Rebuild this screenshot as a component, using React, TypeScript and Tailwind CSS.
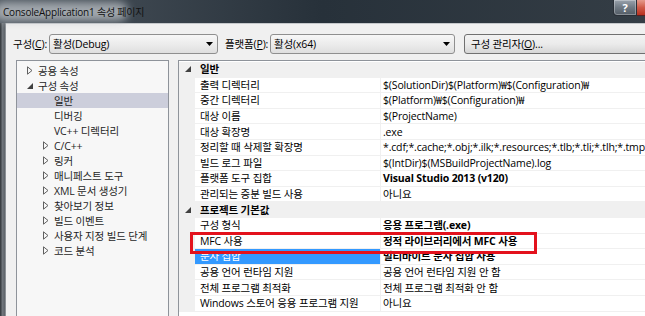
import React from "react";

type TreeItem = { label: string; level: 0 | 1; kind: "closed" | "open" | "none"; selected?: boolean };

const treeItems: TreeItem[] = [
  { label: "공용 속성", level: 0, kind: "closed" },
  { label: "구성 속성", level: 0, kind: "open" },
  { label: "일반", level: 1, kind: "none", selected: true },
  { label: "디버깅", level: 1, kind: "none" },
  { label: "VC++ 디렉터리", level: 1, kind: "none" },
  { label: "C/C++", level: 1, kind: "closed" },
  { label: "링커", level: 1, kind: "closed" },
  { label: "매니페스트 도구", level: 1, kind: "closed" },
  { label: "XML 문서 생성기", level: 1, kind: "closed" },
  { label: "찾아보기 정보", level: 1, kind: "closed" },
  { label: "빌드 이벤트", level: 1, kind: "closed" },
  { label: "사용자 지정 빌드 단계", level: 1, kind: "closed" },
  { label: "코드 분석", level: 1, kind: "closed" },
];

type GridRow =
  | { type: "cat"; label: string }
  | { type: "prop"; name: string; value: string; bold?: boolean; selected?: boolean };

const gridRows: GridRow[] = [
  { type: "cat", label: "일반" },
  { type: "prop", name: "출력 디렉터리", value: "$(SolutionDir)$(Platform)₩$(Configuration)₩" },
  { type: "prop", name: "중간 디렉터리", value: "$(Platform)₩$(Configuration)₩" },
  { type: "prop", name: "대상 이름", value: "$(ProjectName)" },
  { type: "prop", name: "대상 확장명", value: ".exe" },
  {
    type: "prop",
    name: "정리할 때 삭제할 확장명",
    value: "*.cdf;*.cache;*.obj;*.ilk;*.resources;*.tlb;*.tli;*.tlh;*.tmp;*.rsp;*.pgc;*.pgd;*.meta",
  },
  { type: "prop", name: "빌드 로그 파일", value: "$(IntDir)$(MSBuildProjectName).log" },
  { type: "prop", name: "플랫폼 도구 집합", value: "Visual Studio 2013 (v120)", bold: true },
  { type: "prop", name: "관리되는 증분 빌드 사용", value: "아니요" },
  { type: "cat", label: "프로젝트 기본값" },
  { type: "prop", name: "구성 형식", value: "응용 프로그램(.exe)", bold: true },
  { type: "prop", name: "MFC 사용", value: "정적 라이브러리에서 MFC 사용", bold: true },
  { type: "prop", name: "문자 집합", value: "멀티바이트 문자 집합 사용", bold: true, selected: true },
  { type: "prop", name: "공용 언어 런타임 지원", value: "공용 언어 런타임 지원 안 함" },
  { type: "prop", name: "전체 프로그램 최적화", value: "전체 프로그램 최적화 안 함" },
  { type: "prop", name: "Windows 스토어 응용 프로그램 지원", value: "아니요" },
];

const ClosedArrow = () => (
  <svg width="6" height="9" viewBox="0 0 6 9" className="shrink-0">
    <path d="M0.5 0.8 L5 4.5 L0.5 8.2 Z" fill="none" stroke="#606060" strokeWidth="1" />
  </svg>
);

const OpenArrow = () => (
  <svg width="6" height="6" viewBox="0 0 6 6" className="shrink-0">
    <path d="M6 0 L6 6 L0 6 Z" fill="#404040" />
  </svg>
);

const DropArrow = () => (
  <svg width="7" height="4" viewBox="0 0 7 4">
    <path d="M0 0 L7 0 L3.5 4 Z" fill="#000" />
  </svg>
);

const Combo = ({ text, width }: { text: string; width: string }) => (
  <div
    className={`${width} h-[20px] flex items-center justify-between pl-[3px] pr-[4px] rounded-[3px] border border-[#8f8f8f] bg-gradient-to-b from-[#f7f7f7] via-[#ececec] to-[#dfdfdf]`}
  >
    <span>{text}</span>
    <DropArrow />
  </div>
);

const Tree = () => (
  <div className="w-[153px] h-[270px] shrink-0 border border-[#8e939a] bg-[#f7f7f7] pt-[2px] text-[#1e1e1e]">
    {treeItems.map((item) => (
      <div
        key={item.label}
        className={`h-[15px] flex items-center ${item.selected ? "bg-[#cccedb]" : ""} ${
          item.level === 0 ? "pl-[10px]" : "pl-[26px]"
        }`}
      >
        <div className="w-[11px] flex items-center">
          {item.kind === "closed" && <ClosedArrow />}
          {item.kind === "open" && <OpenArrow />}
        </div>
        <span className="whitespace-nowrap">{item.label}</span>
      </div>
    ))}
  </div>
);

const Grid = () => (
  <div className="flex-1 h-[270px] border-l border-t border-[#8e939a] bg-white pt-[1px] overflow-hidden">
    {gridRows.map((row, i) =>
      row.type === "cat" ? (
        <div key={i} className="h-[15.6px] flex items-center bg-[#f0f0f0] border-b border-[#f0f0f0]">
          <div className="w-[16px] flex items-center justify-end pr-[4px]">
            <OpenArrow />
          </div>
          <span className="pl-[5px] font-bold whitespace-nowrap">{row.label}</span>
        </div>
      ) : (
        <div key={i} className="h-[15.6px] flex border-b border-[#f0f0f0]">
          <div className="w-[16px] shrink-0 bg-[#f0f0f0]" />
          <div
            className={`w-[185px] shrink-0 flex items-center pl-[5px] whitespace-nowrap ${
              row.selected ? "bg-[#3399ff] text-white" : ""
            }`}
          >
            {row.name}
          </div>
          <div className="w-px shrink-0 bg-[#f0f0f0]" />
          <div className={`flex-1 flex items-center pl-[2px] whitespace-nowrap ${row.bold ? "font-bold" : ""}`}>
            {row.value}
          </div>
        </div>
      )
    )}
  </div>
);

export default function App() {
  return (
    <div className="relative w-[645px] h-[316px] overflow-hidden bg-[#222b33] font-['Open_Sans','Noto_Sans_CJK_KR',sans-serif] text-[10.5px] leading-[14px] tracking-[-0.15px] text-black">
      {/* title bar */}
      <div className="relative h-[23px] flex items-start bg-gradient-to-r from-[#4c555e] via-[#27313a] to-[#343d45]">
        <div className="absolute left-[-6px] top-[2px] w-[134px] h-[19px] rounded-full bg-[#b9bec3]/80 blur-[4px]" />
        <span className="relative mt-[5px] ml-[3px] text-[10px] tracking-[-0.2px] text-[#111]">
          ConsoleApplication1 속성 페이지
        </span>
        <div className="ml-auto mr-[-35px] flex">
          <div className="w-[24px] h-[16px] flex items-center justify-center rounded-bl-[4px] border border-t-0 border-[#2a3038] bg-gradient-to-b from-[#9aa3ad] via-[#6f7983] to-[#535c66] text-white font-bold text-[11px] shadow-[inset_0_0_0_1px_rgba(255,255,255,0.3)]">
            ?
          </div>
          <div className="w-[43px] h-[16px] border border-t-0 border-l-0 border-[#5a2020] bg-gradient-to-b from-[#e59a8c] via-[#cf5a48] to-[#b8301f]" />
        </div>
      </div>

      {/* window body */}
      <div className="flex h-[293px]">
        <div className="w-[6px] shrink-0 bg-gradient-to-r from-[#2e3337] via-[#6f757b] to-[#5d6369] border-r border-[#8c9196]" />
        <div className="flex-1 bg-[#f0f0f0] border-t border-[#c5c8cb] flex flex-col">
          <div className="flex items-center mt-[10px] h-[20px]">
            <span className="ml-[7px] w-[36px]">
              구성(<span className="underline">C</span>):
            </span>
            <Combo text="활성(Debug)" width="w-[169px]" />
            <span className="ml-[7px] w-[45px]">
              플랫폼(<span className="underline">P</span>):
            </span>
            <Combo text="활성(x64)" width="w-[185px]" />
            <div className="ml-[9px] w-[200px] h-[20px] flex items-center pl-[6px] rounded-[3px] border border-[#707070] bg-gradient-to-b from-[#f2f2f2] via-[#ebebeb] to-[#d6d6d6] whitespace-nowrap">
              구성 관리자(<span className="underline">O</span>)...
            </div>
          </div>
          <div className="flex mt-[6px]">
            <div className="ml-[10px]">
              <Tree />
            </div>
            <div className="ml-[9px] flex-1 flex">
              <Grid />
            </div>
          </div>
        </div>
      </div>

      {/* highlight box */}
      <div className="absolute left-[190px] top-[232px] w-[347px] h-[22px] border-[3px] border-[#e3121d]" />
    </div>
  );
}
